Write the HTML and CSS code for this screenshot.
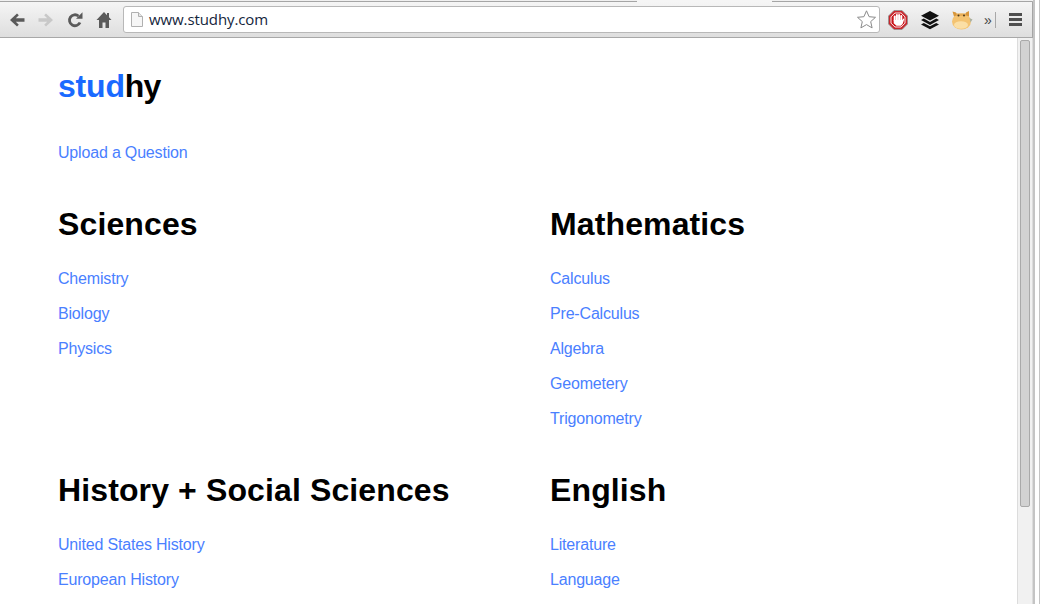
FILE: index.html
```html
<!DOCTYPE html>
<html lang="en">
<head>
<meta charset="utf-8">
<title>studhy</title>
<link rel="stylesheet" href="styles.css">
</head>
<body>
<div class="desktop">
  <div class="window">
    <div class="tabstrip"><span class="tab tab-a"></span><span class="tab-active"></span><span class="tab tab-b"></span></div>
    <div class="toolbar">
      <svg class="tool" width="18" height="18" viewBox="0 0 18 18"><path d="M16.500 7.300H7.800l3-3L9 2.500 2 9l7 6.500 1.800-1.800-3-3h8.700z" fill="#5a5a5a"/></svg>
      <svg class="tool" width="18" height="18" viewBox="0 0 18 18"><path d="M1.500 7.300h8.700l-3-3L9 2.500 16 9l-7 6.500-1.800-1.800 3-3H1.500z" fill="#c8c8c8"/></svg>
      <svg class="tool" width="18" height="18" viewBox="0 0 18 18"><path d="M14 11.500A5.500 5.500 0 1 1 12.500 5" fill="none" stroke="#5a5a5a" stroke-width="2.800"/><path d="M10 7.800h6.500V1.300z" fill="#5a5a5a"/></svg>
      <svg class="tool" width="18" height="18" viewBox="0 0 18 18"><path d="M9 1 1.500 9H4v8h3.500v-5.500h3V17H14V9h2.500L14 6.300V2h-2v2.200z" fill="#5a5a5a"/></svg>
      <div class="omnibox">
        <svg width="14" height="17" viewBox="0 0 14 17"><path d="M1.500 1.500h7l4 4v10h-11z" fill="#f6f6f6" stroke="#b0b0b0"/><path d="M8.500 1.500v4h4" fill="#e6e6e6" stroke="#b0b0b0"/></svg>
        <span class="url">www.studhy.com</span>
        <svg class="star" width="21" height="21" viewBox="0 0 21 21"><path d="m10.500 1.800 2.600 5.900 6.400.6-4.800 4.300 1.400 6.300-5.600-3.300-5.600 3.300 1.400-6.300L1.500 8.300l6.400-.6z" fill="#fff" stroke="#8a8a8a"/></svg>
      </div>
      <svg class="ext ext-first" width="20" height="20" viewBox="0 0 20 20"><path d="M6 .5h8L19.500 6v8L14 19.500H6L.5 14V6z" fill="#c9252b" stroke="#909090" stroke-width=".8"/><path d="M6.900 3h6.200l3.900 3.900v6.200L13.100 17H6.900L3 13.100V6.900z" fill="#c8141a" stroke="#fff" stroke-width=".9"/><g fill="#fff"><rect x="5.700" y="5.600" width="2" height="6" rx="1"/><rect x="7.900" y="4" width="2" height="7" rx="1"/><rect x="10.100" y="4" width="2" height="7" rx="1"/><rect x="12.300" y="5" width="2" height="6" rx="1"/><path d="M5.700 10h8.600l1-1.500 1 .6-1.700 5-1.700 1.600H8.500l-2.800-2.500z"/></g></svg>
      <svg class="ext" width="20" height="20" viewBox="0 0 20 20"><path d="M10 1 19 5.800l-9 4.800-9-4.800z" fill="#111"/><path d="m3.800 8.600 6.200 3.300 6.200-3.300 2.800 1.500-9 4.800-9-4.800z" fill="#111"/><path d="m3.800 12.900 6.200 3.300 6.200-3.300 2.800 1.500-9 4.800-9-4.800z" fill="#111"/></svg>
      <svg class="ext" width="22" height="20" viewBox="0 0 22 20"><ellipse cx="10.500" cy="11.500" rx="9.500" ry="8" fill="#f4c371"/><ellipse cx="10" cy="15" rx="7" ry="3.800" fill="#fbdfa6"/><path d="M1.500 1.500 5 2.500 6.500 5 3 6.500zM18 1 15 2.500 14 5l4 1.500z" fill="#d8963a"/><path d="M5 3.500h10L15 6H5.500z" fill="#e8ad55"/><circle cx="7.500" cy="5.500" r="1" fill="#4a3a20"/><circle cx="13" cy="5.500" r="1" fill="#4a3a20"/><path d="m18.500 8 3 1.500-2 3z" fill="#aab0a0"/></svg>
      <span class="chevron">»</span>
      <span class="divider"></span>
      <span class="menu"><i></i><i></i><i></i></span>
    </div>
    <div class="viewport">
      <main class="page">
        <h1 class="logo"><span class="logo-accent">stud</span>hy</h1>
        <p class="upload"><a href="#">Upload a Question</a></p>
        <div class="subjects">
          <section class="subject">
            <h2>Sciences</h2>
            <ul>
              <li><a href="#">Chemistry</a></li>
              <li><a href="#">Biology</a></li>
              <li><a href="#">Physics</a></li>
            </ul>
          </section>
          <section class="subject">
            <h2>Mathematics</h2>
            <ul>
              <li><a href="#">Calculus</a></li>
              <li><a href="#">Pre-Calculus</a></li>
              <li><a href="#">Algebra</a></li>
              <li><a href="#">Geometery</a></li>
              <li><a href="#">Trigonometry</a></li>
            </ul>
          </section>
          <section class="subject">
            <h2>History + Social Sciences</h2>
            <ul>
              <li><a href="#">United States History</a></li>
              <li><a href="#">European History</a></li>
            </ul>
          </section>
          <section class="subject">
            <h2>English</h2>
            <ul>
              <li><a href="#">Literature</a></li>
              <li><a href="#">Language</a></li>
            </ul>
          </section>
        </div>
      </main>
      <div class="scrollbar"><div class="thumb"></div></div>
    </div>
  </div>
  <div class="gutter"></div>
</div>
</body>
</html>
```
FILE: styles.css
```css
* { box-sizing: border-box; }
html, body { margin: 0; height: 100%; overflow: hidden; background: #fff; }
body { font-family: "Liberation Sans", Arial, sans-serif; }
.desktop { display: flex; width: 1040px; height: 604px; }
.window { width: 1033px; height: 604px; display: flex; flex-direction: column; flex: none; }
.gutter { flex: 1; border-left: 2px solid #c4c4c4; border-right: 1px solid #c4c4c4; background: #fff; }
.tabstrip { height: 2px; display: flex; flex: none; background: #f5f5f5; }
.tab { height: 2px; background: #f0f0f0; border-bottom: 1px solid #a5a5a5; }
.tab-a { width: 637px; }
.tab-active { width: 135px; background: #f5f5f5; }
.tab-b { flex: 1; border-radius: 0 3px 0 0; }
.toolbar { height: 36px; flex: none; display: flex; align-items: center; padding: 0 9px 0 8px; background: linear-gradient(#f5f5f5, #dedede); border-right: 1px solid #a5a5a5; border-bottom: 1px solid #a8a8a8; }
.tool { margin-right: 11px; flex: none; }
.tool:nth-child(4) { margin-right: 10px; }
.omnibox { width: 757px; height: 27px; flex: none; display: flex; align-items: center; background: #fff; border: 1px solid #b8b8b8; border-radius: 3px; padding: 0 2px 0 6px; }
.url { font-family: "Open Sans", "Liberation Sans", sans-serif; font-size: 15px; letter-spacing: -0.1px; color: #14263c; margin-left: 5px; padding-bottom: 2px; flex: 1; }
.star { flex: none; }
.ext { flex: none; margin-left: 12px; }
.ext-first { margin-left: 8px; }
.ext:nth-of-type(7) { margin-left: 11px; }
.chevron { font-size: 14px; color: #444; margin-left: 11px; flex: none; line-height: 1; }
.divider { width: 1px; height: 16px; background: #a8a8a8; margin-left: 3px; flex: none; }
.menu { display: flex; flex-direction: column; gap: 2px; margin-left: 13px; flex: none; }
.menu i { display: block; width: 13px; height: 3px; background: #4f4f4f; }
.viewport { flex: 1; min-height: 0; display: flex; }
.page { flex: 1; min-width: 0; padding: 26px 0 0 58px; overflow: hidden; }
.logo { margin: 0; font-size: 32px; line-height: 45px; font-weight: 700; color: #000; letter-spacing: -0.8px; }
.logo-accent { color: #1a6aff; letter-spacing: -0.2px; }
.upload { margin: 33px 0 0; font-size: 16px; line-height: 22px; letter-spacing: -0.18px; }
a { color: #4a80ff; text-decoration: none; }
.subjects { display: grid; grid-template-columns: 492px 1fr; margin-top: 42px; }
.subject h2 { margin: 0; font-size: 32px; line-height: 36px; font-weight: 700; color: #000; letter-spacing: 0.12px; }
.subject ul { list-style: none; margin: 19px 0 0; padding: 0 0 36px; }
.subject li { font-size: 16px; line-height: 35px; letter-spacing: -0.18px; }
.scrollbar { width: 16px; flex: none; background: #f1f1f1; border-left: 1px solid #dcdcdc; border-right: 1px solid #dcdcdc; padding: 2px 2px 0; }
.thumb { height: 467px; background: #d2d2d2; border: 1px solid #a9a9a9; border-radius: 2px; }
```
